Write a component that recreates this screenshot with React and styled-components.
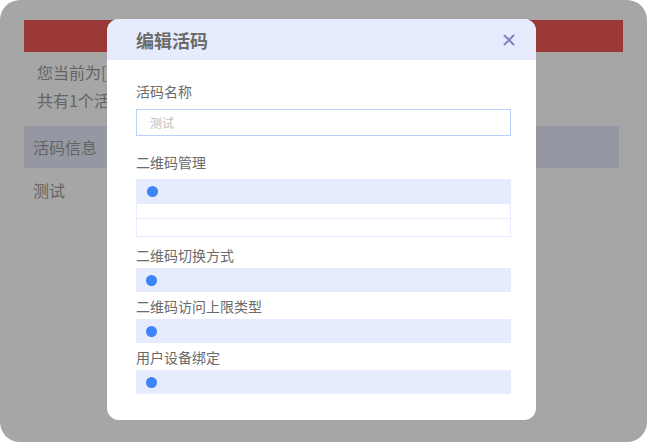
import React from 'react';
import styled, { createGlobalStyle } from 'styled-components';

const GlobalStyle = createGlobalStyle`
  html, body {
    margin: 0;
    padding: 0;
    background: #fff;
  }
  body {
    font-family: "Noto Sans CJK SC", "Noto Sans", sans-serif;
  }
`;

const Frame = styled.div`
  position: relative;
  width: 647px;
  height: 442px;
  border-radius: 20px;
  overflow: hidden;
  background: #fff;
`;

const Page = styled.div`
  padding: 20px 24px 0 24px;
  box-sizing: border-box;
`;

const TopBar = styled.div`
  height: 32px;
  width: 599px;
  background: #ee5656;
`;

const Info = styled.div`
  padding: 6px 0 0 13px;
  width: 70px;
  overflow: hidden;
  white-space: nowrap;
  color: #9a9a9a;
  font-size: 16px;
  line-height: 28px;
`;

const Band = styled.div`
  margin-top: 12px;
  height: 42px;
  width: 595px;
  background: #e5eaf9;
  color: #9a9a9a;
  font-size: 16px;
  line-height: 42px;
  padding-left: 9px;
  box-sizing: border-box;
`;

const Cell = styled.div`
  color: #9a9a9a;
  font-size: 16px;
  line-height: 44px;
  padding-left: 9px;
`;

const Mask = styled.div`
  position: absolute;
  inset: 0;
  background: rgba(0, 0, 0, 0.35);
`;

const Modal = styled.div`
  position: absolute;
  left: 107px;
  top: 19px;
  width: 429px;
  background: #fff;
  border-radius: 12px;
  overflow: hidden;
  padding-bottom: 26px;
`;

const ModalHead = styled.div`
  height: 41px;
  background: #e6ecfd;
  display: flex;
  align-items: center;
  justify-content: space-between;
  padding: 0 21px 0 29px;
`;

const ModalTitle = styled.h3`
  margin: 0;
  font-size: 18px;
  font-weight: 700;
  color: #6b6b6b;
`;

const Close = styled.button`
  border: 0;
  background: none;
  padding: 0;
  width: 12px;
  height: 12px;
  display: flex;
  cursor: pointer;
`;

const ModalBody = styled.div`
  padding: 0 25px 0 29px;
  display: flex;
  flex-direction: column;
`;

const Label = styled.div`
  font-size: 14px;
  line-height: 26px;
  color: #6a6a6a;
  margin-top: ${p => p.$mt || 0}px;
`;

const Input = styled.input`
  margin-top: 5px;
  height: 27px;
  border: 1px solid #b9d1fb;
  box-sizing: border-box;
  padding: 0 13px;
  font-size: 12px;
  font-family: inherit;
  color: #333;
  outline: none;
  &::placeholder {
    color: #bdbdbd;
  }
`;

const Table = styled.div`
  margin-top: 4px;
  border: 1px solid #e6ecfd;
  border-top: 0;
  display: flex;
  flex-direction: column;
`;

const Row = styled.div`
  height: ${p => p.$h}px;
  box-sizing: border-box;
  display: flex;
  align-items: center;
  padding-left: 10px;
  background: ${p => (p.$fill ? '#e6ecfd' : '#fff')};
  & + & {
    border-top: 1px solid #e6ecfd;
  }
`;

const Option = styled.div`
  height: 24px;
  background: #e6ecfd;
  display: flex;
  align-items: center;
  padding-left: 10px;
`;

const Dot = styled.span`
  width: 11px;
  height: 11px;
  border-radius: 50%;
  background: #3c84f7;
`;

const radioGroups = ['二维码切换方式', '二维码访问上限类型', '用户设备绑定'];

export default function App() {
  return (
    <>
      <GlobalStyle />
      <Frame>
        <Page>
          <TopBar />
          <Info>
            <div>您当前为[测试]账户</div>
            <div>共有1个活码</div>
          </Info>
          <Band>活码信息</Band>
          <Cell>测试</Cell>
        </Page>
        <Mask />
        <Modal>
          <ModalHead>
            <ModalTitle>编辑活码</ModalTitle>
            <Close aria-label="关闭">
              <svg width="12" height="12" viewBox="0 0 12 12">
                <path d="M1.5 1.5 L10.5 10.5 M10.5 1.5 L1.5 10.5" stroke="#7b86b8" strokeWidth="2" strokeLinecap="round" />
              </svg>
            </Close>
          </ModalHead>
          <ModalBody>
            <Label $mt={18}>活码名称</Label>
            <Input placeholder="测试" />
            <Label $mt={13}>二维码管理</Label>
            <Table>
              <Row $h={24} $fill><Dot /></Row>
              <Row $h={15} />
              <Row $h={18} />
            </Table>
            {radioGroups.map((g, i) => (
              <React.Fragment key={g}>
                <Label $mt={i === 0 ? 5 : 1}>{g}</Label>
                <Option><Dot /></Option>
              </React.Fragment>
            ))}
          </ModalBody>
        </Modal>
      </Frame>
    </>
  );
}
